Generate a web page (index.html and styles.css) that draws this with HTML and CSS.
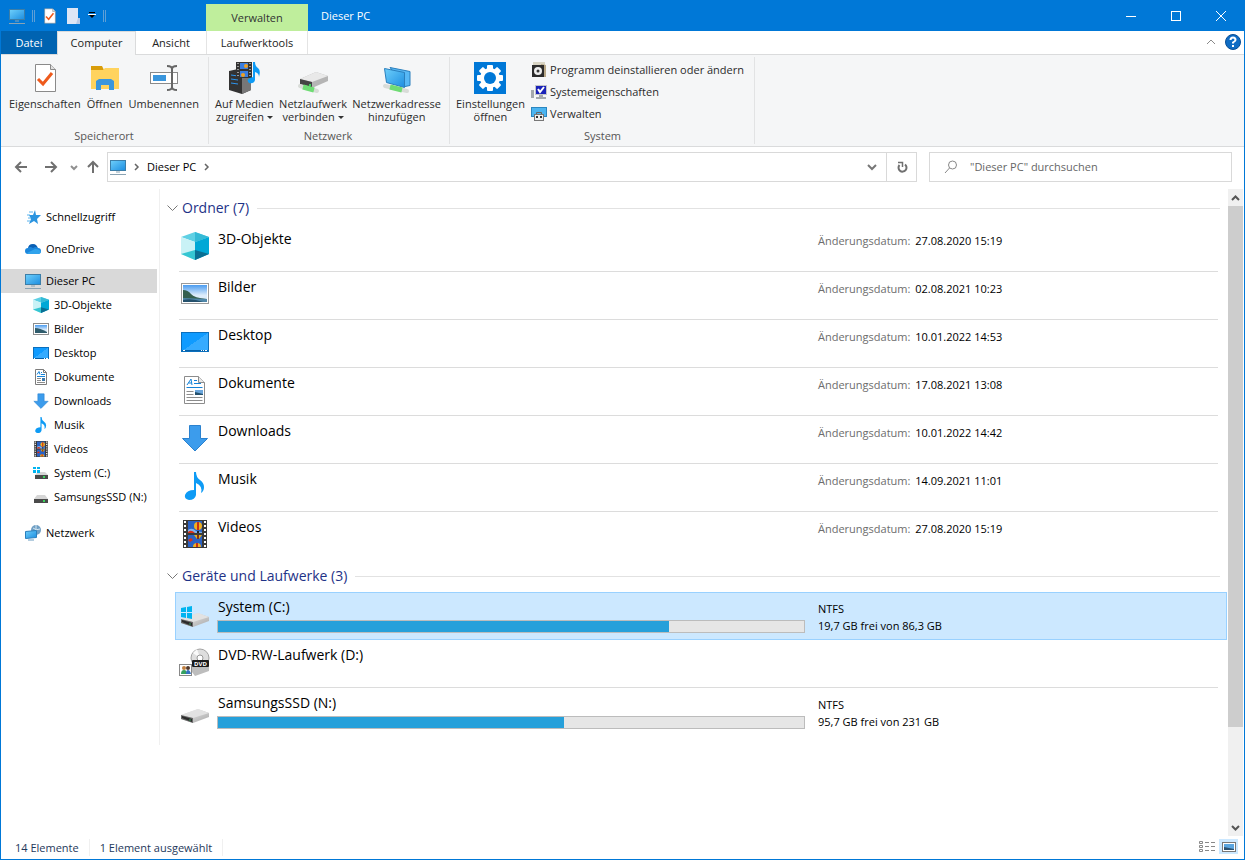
FILE: index.html
```html
<!DOCTYPE html>
<html lang="de">

<head>
    <meta charset="UTF-8">
    <meta name="viewport" content="width=device-width, initial-scale=1.0">
    <title>Dieser PC</title>
    <link rel="stylesheet" href="styles.css">
</head>

<body>

    <!-- shared icons -->
    <svg class="sprite" aria-hidden="true">
        <defs>
            <linearGradient id="g-screen" x1="0" y1="0" x2="1" y2="1">
                <stop offset="0" stop-color="#6fd0fb" />
                <stop offset="1" stop-color="#1c8de0" />
            </linearGradient>
            <linearGradient id="g-desk" x1="0" y1="0" x2="1" y2="1">
                <stop offset="0.5" stop-color="#0f9bff" />
                <stop offset="0.5" stop-color="#35abff" />
            </linearGradient>
            <linearGradient id="g-sky" x1="0" y1="0" x2="0" y2="1">
                <stop offset="0" stop-color="#4b9cf0" />
                <stop offset="0.6" stop-color="#dcecfb" />
            </linearGradient>
            <linearGradient id="g-drive" x1="0" y1="0" x2="1" y2="1">
                <stop offset="0" stop-color="#f2f2f2" />
                <stop offset="1" stop-color="#a8a8a8" />
            </linearGradient>
        </defs>
        <symbol id="i-pc" viewBox="0 0 16 16">
            <rect x="0.5" y="1.5" width="15" height="10" fill="url(#g-screen)" stroke="#3c7ea8" />
            <path d="M6 13h4M0 15.5h16" stroke="#8aa3b3" />
        </symbol>
        <symbol id="i-cube" viewBox="0 0 28 28">
            <path d="M0 5L14 0l14 5-14 5z" fill="#5fd0e4" />
            <path d="M14 0l14 5-14 5z" fill="#35bad6" />
            <path d="M0 5l14 5v18L0 22z" fill="#c9f2f6" />
            <path d="M28 5l-14 5v18l14-6z" fill="#00a8d6" />
            <path d="M0 22l14-4v10z" fill="#35c6d2" />
            <path d="M28 22l-14-4v10z" fill="#0a6f93" />
        </symbol>
        <symbol id="i-picture" viewBox="0 0 28 28">
            <rect x="0.5" y="3.5" width="27" height="20" fill="#fff" stroke="#9a9a9a" />
            <rect x="2" y="5" width="24" height="17" fill="url(#g-sky)" />
            <path d="M2 10q5 0 8 4t16 5v1H2z" fill="#35604f" />
            <path d="M2 18l24 1v3H2z" fill="#4f86a8" />
            <path d="M2 20q9-2 20 2H2z" fill="#24506c" />
        </symbol>
        <symbol id="i-picture-small" viewBox="0 0 16 16">
            <rect x="0.5" y="2.5" width="15" height="11" fill="#fff" stroke="#8c8c8c" />
            <rect x="2" y="4" width="12" height="8" fill="url(#g-sky)" />
            <path d="M2 7q5 0 12 4v1H2z" fill="#2f5c6c" />
        </symbol>
        <symbol id="i-desktop" viewBox="0 0 28 28">
            <rect x="0.5" y="4.5" width="27" height="19" fill="url(#g-desk)" stroke="#0a6fbd" />
            <path d="M1 22.5h26" stroke="#0560a8" />
            <path d="M2 22.5h2M20 22.5h1M22 22.5h1M24 22.5h2" stroke="#fff" />
        </symbol>
        <symbol id="i-desktop-small" viewBox="0 0 16 16">
            <rect x="0.5" y="2.5" width="15" height="11" fill="url(#g-desk)" stroke="#0a6fbd" />
            <path d="M1 13.5h14" stroke="#0560a8" />
            <path d="M1 13.5h1M11 13.5h1M13 13.5h2" stroke="#fff" />
        </symbol>
        <symbol id="i-doc" viewBox="0 0 28 28">
            <path d="M3.500 0.500h14l6 6v21h-20z" fill="#fff" stroke="#8c8c8c" />
            <path d="M17.500 0.500v6h6" fill="#e8e8e8" stroke="#8c8c8c" />
            <path d="M6 9l4-6 1 6M7.500 7h3M13 4.500h3M13 7.500h7M5.500 11.500h16" stroke="#1583d8" fill="none" />
            <path d="M5.500 15.500h7M5.500 18.500h7M5.500 21.500h16M5.500 24.500h16" stroke="#8c8c8c" />
            <rect x="14" y="14" width="8" height="5" fill="#6ba6dc" />
            <path d="M14 16l8 2v1h-8z" fill="#24506c" />
        </symbol>
        <symbol id="i-doc-small" viewBox="0 0 16 16">
            <path d="M2.500 0.500h8l3 3v12h-11z" fill="#fff" stroke="#7c7c7c" />
            <path d="M10.500 0.500v3h3" fill="none" stroke="#7c7c7c" />
            <path d="M4 5.500l2-3 1 3M8 3.500h1M8 5.500h4M4 7.500h8" stroke="#1583d8" fill="none" />
            <path d="M4 9.500h4M4 11.500h4M4 13.500h8" stroke="#8c8c8c" />
            <rect x="9" y="9" width="3" height="3" fill="#3f78a8" />
        </symbol>
        <symbol id="i-down" viewBox="0 0 28 28">
            <path d="M8.500 1.500h11v13h7L14 27 1.500 14.500h7z" fill="#3c9cec" stroke="#2b82cf" />
        </symbol>
        <symbol id="i-music" viewBox="0 0 28 28">
            <path d="M13 0h2q0 5 4 8t4 7q0 4-3 6 2-7-5-10v12q-1 5-7 5-5-1-4-5 2-5 9-5z" fill="#0e9bf5" />
        </symbol>
        <symbol id="i-video" viewBox="0 0 28 28">
            <rect x="2" y="0" width="24" height="28" fill="#3a3a3a" />
            <path d="M4 1v27M24 1v27" stroke="#fff" stroke-width="2" stroke-dasharray="2 2" />
            <rect x="7" y="1" width="14" height="12" fill="#2a62c4" />
            <rect x="7" y="15" width="14" height="12" fill="#2a62c4" />
            <path d="M7 10q4-3 8 1l6 1v1H7z" fill="#7fb3ec" />
            <path d="M7 12q3-3 7 1H7z" fill="#d83018" />
            <ellipse cx="17" cy="6" rx="4" ry="4" fill="#f0b020" />
            <path d="M17 2v8" stroke="#c83018" stroke-width="2" />
            <path d="M16 11h2v2h-2z" fill="#222" />
            <path d="M13 15h8l-3 4h-2z" fill="#e8b020" />
            <path d="M17 15v4" stroke="#803018" stroke-width="2" />
            <path d="M7 20l3-2 2 2-3 2z" fill="#d83018" />
            <path d="M12 27q0-4 4-4t4 4z" fill="#f0b020" />
            <path d="M16 23v4" stroke="#c83018" stroke-width="2" />
        </symbol>
        <symbol id="i-drive" viewBox="0 0 28 28">
            <path d="M0 19L17 13l11 4v4L12 27 0 23z" fill="url(#g-drive)" />
            <path d="M0 19L17 13l11 4-16 5z" fill="#e2e2e2" />
            <path d="M0 19l12 3v5L0 23z" fill="#6a6a6a" />
            <path d="M1 20l10 3v3L1 22z" fill="#2b2b2b" />
            <path d="M8 24h2" stroke="#3b9d5c" />
        </symbol>
        <symbol id="i-windrive" viewBox="0 0 28 28">
            <use href="#i-drive" />
            <path d="M0 8l5-1v5H0zM6 7l5-1v6H6zM0 13h5v5l-5-1zM6 13h5v6l-5-1z" fill="#00b4f0" />
        </symbol>
        <symbol id="i-sdrive" viewBox="0 0 16 16">
            <path d="M4 6h8l3 4H1z" fill="#d6d6d6" />
            <rect x="1" y="10" width="14" height="4" fill="#4a4a4a" />
            <path d="M10 12h2" stroke="#3bd45c" stroke-width="2" />
        </symbol>
        <symbol id="i-swindrive" viewBox="0 0 16 16">
            <path d="M5 7h7l3 3H2z" fill="#d6d6d6" />
            <rect x="2" y="10" width="13" height="4" fill="#4a4a4a" />
            <path d="M10 12h2" stroke="#3bd45c" stroke-width="2" />
            <path d="M0 2h3v2H0zM4 2h3v2H4zM0 5h3v3H0zM4 5h3v3H4z" fill="#00b4f0" />
        </symbol>
        <symbol id="i-check" viewBox="0 0 32 32">
            <path d="M6.500 2.500h15l5 5v22h-20z" fill="#fff" stroke="#8a8a8a" />
            <path d="M21.500 2.500v5h5" fill="#e0e0e0" stroke="#8a8a8a" />
            <path d="M9 17l5 5 9-11" fill="none" stroke="#ee5a1c" stroke-width="3" />
        </symbol>
    </svg>

    <div class="window">

        <header class="titlebar">
            <div class="quick">
                <svg class="ic16"><use href="#i-pc" /></svg>
                <span class="sep"></span>
                <button class="quick-btn props" aria-label="Eigenschaften"><svg class="ic16" viewBox="5 1 23 30"><use href="#i-check" width="32" height="32" /></svg></button>
                <button class="quick-btn" aria-label="Neuer Ordner"><svg class="ic16" viewBox="0 0 16 16"><path d="M2 0h11v10h2v6H2z" fill="#dde6f5" /><path d="M13 10h2v6h-4z" fill="#b9cbe8" /></svg></button>
                <button class="quick-btn small" aria-label="Anpassen"><svg width="8" height="7" viewBox="0 0 8 7"><path d="M1 0.500h6" stroke="#000" /><path d="M0 2.500h8" stroke="#fff" /><path d="M1 3h6L4 6z" fill="#000" /></svg></button>
                <span class="sep"></span>
            </div>
            <div class="context-title">Verwalten</div>
            <h1 class="title">Dieser PC</h1>
            <div class="caption">
                <button aria-label="Minimieren"><svg width="10" height="10" viewBox="0 0 10 10"><path d="M0 5.500h10" stroke="#fff" /></svg></button>
                <button aria-label="Maximieren"><svg width="10" height="10" viewBox="0 0 10 10"><rect x="0.500" y="0.500" width="9" height="9" fill="none" stroke="#fff" /></svg></button>
                <button aria-label="Schließen"><svg width="10" height="10" viewBox="0 0 10 10"><path d="M0 0l10 10M10 0L0 10" stroke="#fff" /></svg></button>
            </div>
        </header>

        <div class="tabs">
            <button class="tab file">Datei</button>
            <button class="tab active">Computer</button>
            <button class="tab view">Ansicht</button>
            <button class="tab tools">Laufwerktools</button>
            <div class="tabs-right">
                <button aria-label="Menüband minimieren"><svg width="10" height="6" viewBox="0 0 10 6"><path d="M1 5l4-4 4 4" fill="none" stroke="#8a8a8a" /></svg></button>
                <button aria-label="Hilfe"><svg width="16" height="16" viewBox="0 0 16 16"><circle cx="8" cy="8" r="7.500" fill="#0f6cc4" stroke="#0a4f96" /><path d="M5.500 6q0-2.500 2.500-2.500T10.500 6Q10.500 7 8 8.500v1M8 11v2" fill="none" stroke="#fff" stroke-width="2" /></svg></button>
            </div>
        </div>

        <div class="ribbon">
            <section class="group place">
                <div class="tools-row">
                    <button class="big"><svg class="ic32"><use href="#i-check" /></svg>Eigenschaften</button>
                    <button class="big"><svg class="ic32" viewBox="0 0 32 32"><path d="M2 4h11l2 4H2z" fill="#d99d0a" /><path d="M2 8h12l2-2h14v21H2z" fill="#ffd35e" /><path d="M7 28V19l3-2h12l3 2v9h-5v-5h-8v5z" fill="#3a96dd" /></svg>Öffnen</button>
                    <button class="big"><svg class="ic32" viewBox="0 0 32 32"><rect x="2.500" y="10.500" width="27" height="11" fill="#fff" stroke="#8a8a8a" /><rect x="5" y="13" width="13" height="6" fill="#3a96dd" /><path d="M24 5v22M19 4q5 0 5 3 0-3 5-3M19 28q5 0 5-3 0 3 5 3" fill="none" stroke="#666" stroke-width="2" /></svg>Umbenennen</button>
                </div>
                <h2>Speicherort</h2>
            </section>
            <section class="group net">
                <div class="tools-row">
                    <button class="big"><svg class="ic32" viewBox="0 0 32 32"><path d="M1 9l9-2 13 3v18l-9 4L1 28z" fill="#333" /><path d="M14 12l9-2v18l-9 4z" fill="#777" /><path d="M3 13l7 1M3 17l7 1M3 21l7 1" stroke="#2d95ee" /><rect x="8" y="0" width="16" height="16" fill="#333" /><path d="M10 1v15M22 1v15" stroke="#fff" stroke-dasharray="1 2" /><rect x="12" y="1" width="8" height="6" fill="#3a7ee0" /><rect x="12" y="9" width="8" height="6" fill="#3a7ee0" /><circle cx="18" cy="4" r="2" fill="#f0a020" /><circle cx="15" cy="13" r="2" fill="#f0a020" /><path d="M25 0h2q0 4 3 6t1 9q0-4-4-5v8q-1 4-6 3-4-4 4-6z" fill="#0e9bf5" /></svg><span>Auf Medien<br>zugreifen <i class="drop"></i></span></button>
                    <button class="big"><svg class="ic32" viewBox="0 0 32 32"><path d="M3 17L19 10l12 4v5l-16 7-12-4z" fill="#b5b5b5" /><path d="M3 17L19 10l12 4-16 6z" fill="#e9e9e9" /><path d="M3 17l12 3v6L3 22z" fill="#444" /><path d="M3 24l17 5" stroke="#d8dcd8" stroke-width="4" stroke-linecap="round" /><path d="M6 25l11 3" stroke="#6fdc74" stroke-width="5" /><path d="M12 23h2" stroke="#3bd45c" stroke-width="2" /></svg><span>Netzlaufwerk<br>verbinden <i class="drop"></i></span></button>
                    <button class="big"><svg class="ic32" viewBox="0 0 32 32"><path d="M9 5.500l20 4v14l-5 1z" fill="#57b8f5" stroke="#2a7fbd" /><path d="M3.500 6.500l20 4v15l-18-5z" fill="url(#g-screen)" stroke="#2a7fbd" /><path d="M4 24l22 5" stroke="#d8dcd8" stroke-width="4" stroke-linecap="round" /><path d="M9 25l12 3" stroke="#6fdc74" stroke-width="5" /></svg><span>Netzwerkadresse<br>hinzufügen</span></button>
                </div>
                <h2>Netzwerk</h2>
            </section>
            <section class="group sys">
                <div class="tools-row">
                    <button class="big"><svg class="ic32" viewBox="0 0 32 32"><rect width="32" height="32" fill="#0078d7" /><g fill="#fff"><rect id="tooth" x="13" y="3" width="6" height="26" rx="1" /><use href="#tooth" transform="rotate(45 16 16)" /><use href="#tooth" transform="rotate(90 16 16)" /><use href="#tooth" transform="rotate(135 16 16)" /><circle cx="16" cy="16" r="10" /></g><circle cx="16" cy="16" r="6" fill="#0078d7" /></svg><span>Einstellungen<br>öffnen</span></button>
                    <div class="stack">
                        <button class="line"><svg class="ic16" viewBox="0 0 16 16"><path d="M2 0h12v5H2z" fill="#d8d4c4" /><path d="M10 2l5 1v12h-5z" fill="#b8a888" /><rect x="1" y="3" width="12" height="12" fill="#2c2c2c" /><circle cx="7" cy="9" r="4" fill="#eee" /><circle cx="7" cy="9" r="1.500" fill="#333" /></svg>Programm deinstallieren oder ändern</button>
                        <button class="line"><svg class="ic16" viewBox="0 0 16 16"><rect x="0" y="6" width="3" height="8" fill="#a5a9ad" /><rect x="4" y="1" width="12" height="10" fill="#c4c6ca" /><rect x="5" y="2" width="10" height="8" fill="#1a22b8" /><path d="M7 5l2 3 4-5" stroke="#fff" stroke-width="2" fill="none" /><path d="M8 11h4v2h3v2H5v-2h3z" fill="#a5a9ad" /></svg>Systemeigenschaften</button>
                        <button class="line"><svg class="ic16" viewBox="0 0 16 16"><rect x="0.500" y="1.500" width="15" height="9" fill="#4bb4f0" stroke="#2a86c0" /><path d="M5.500 8V6.500h5V8" fill="none" stroke="#666" /><rect x="3.500" y="8.500" width="9" height="6" fill="#eee" stroke="#777" /><path d="M5 10h2v2H5zM9 10h2v2H9z" fill="#333" /></svg>Verwalten</button>
                    </div>
                </div>
                <h2>System</h2>
            </section>
        </div>

        <div class="addressbar">
            <div class="history">
                <button aria-label="Zurück"><svg width="14" height="12" viewBox="0 0 14 12"><path d="M13 6H2M7 1L2 6l5 5" fill="none" stroke="#707070" stroke-width="2" /></svg></button>
                <button aria-label="Vorwärts"><svg width="14" height="12" viewBox="0 0 14 12"><path d="M1 6h11M7 1l5 5-5 5" fill="none" stroke="#707070" stroke-width="2" /></svg></button>
                <button class="narrow" aria-label="Verlauf"><svg width="6" height="5" viewBox="0 0 6 5"><path d="M0 1l3 3 3-3" fill="none" stroke="#909090" stroke-width="2" /></svg></button>
                <button class="up" aria-label="Nach oben"><svg width="12" height="14" viewBox="0 0 12 14"><path d="M6 13V2M1 7l5-5 5 5" fill="none" stroke="#707070" stroke-width="2" /></svg></button>
            </div>
            <div class="path">
                <svg class="ic16"><use href="#i-pc" /></svg>
                <svg class="crumb" width="5" height="8" viewBox="0 0 5 8"><path d="M1 1l3 3-3 3" fill="none" stroke="#666" stroke-width="1.500" /></svg>
                <a href="#">Dieser PC</a>
                <svg class="crumb" width="5" height="8" viewBox="0 0 5 8"><path d="M1 1l3 3-3 3" fill="none" stroke="#666" stroke-width="1.500" /></svg>
                <button class="open" aria-label="Vorherige Orte"><svg width="10" height="7" viewBox="0 0 10 7"><path d="M1 1l4 4 4-4" fill="none" stroke="#777" stroke-width="2" /></svg></button>
                <button class="reload" aria-label="Aktualisieren"><svg width="12" height="12" viewBox="0 0 12 12"><path d="M9 3.500A4 4 0 1 1 3.500 4" fill="none" stroke="#707070" stroke-width="2" /><path d="M2 1.500h4.500V6" fill="none" stroke="#707070" stroke-width="1.500" /></svg></button>
            </div>
            <div class="search">
                <svg width="14" height="14" viewBox="0 0 14 14"><circle cx="8.500" cy="5" r="4" fill="none" stroke="#888" /><path d="M5.500 8L1 13" stroke="#888" /></svg>
                <input type="search" aria-label="Suchen" placeholder="&quot;Dieser PC&quot; durchsuchen">
            </div>
        </div>

        <div class="main">
            <div class="browse">
                <nav class="tree">
                    <a href="#"><svg class="ic16" viewBox="0 0 16 16"><path d="M10 1l1 5h5l-4 4 1 5-4-3-5 3 2-5-2-4h4z" fill="#2a94e0" /><path d="M4 3h4M2 6h3M3 9h3M2 12h3" stroke="#5bb4ee" /></svg>Schnellzugriff</a>
                    <a href="#"><svg class="ic16" viewBox="0 0 16 16"><path d="M3 8q0-5 5-5 4 0 5 5z" fill="#0a5fb4" /><path d="M0 10q0-3 3-3 2-2 5 0 3-2 5 0 3 0 3 3t-3 3H3q-3 0-3-3z" fill="#1b86dc" /><path d="M2 12l8-4q5 0 6 3-1 2-3 2H3z" fill="#30a3ec" /></svg>OneDrive</a>
                    <a href="#" class="current"><svg class="ic16"><use href="#i-pc" /></svg>Dieser PC</a>
                    <ul>
                        <li><a href="#"><svg class="ic16"><use href="#i-cube" /></svg>3D-Objekte</a></li>
                        <li><a href="#"><svg class="ic16"><use href="#i-picture-small" /></svg>Bilder</a></li>
                        <li><a href="#"><svg class="ic16"><use href="#i-desktop-small" /></svg>Desktop</a></li>
                        <li><a href="#"><svg class="ic16"><use href="#i-doc-small" /></svg>Dokumente</a></li>
                        <li><a href="#"><svg class="ic16"><use href="#i-down" /></svg>Downloads</a></li>
                        <li><a href="#"><svg class="ic16"><use href="#i-music" /></svg>Musik</a></li>
                        <li><a href="#"><svg class="ic16"><use href="#i-video" /></svg>Videos</a></li>
                        <li><a href="#"><svg class="ic16"><use href="#i-swindrive" /></svg>System (C:)</a></li>
                        <li><a href="#"><svg class="ic16"><use href="#i-sdrive" /></svg>SamsungsSSD (N:)</a></li>
                    </ul>
                    <a href="#" class="network"><svg class="ic16" viewBox="0 0 16 16"><circle cx="11" cy="5" r="5" fill="#6f9fc4" /><path d="M8 3q3 3 7 1M11 0v9" stroke="#d3e6f2" fill="none" /><path d="M0.500 6.500l11-1v7l-11 1z" fill="url(#g-screen)" stroke="#2a7fbd" /><path d="M3 15h6" stroke="#6a9cc0" /></svg>Netzwerk</a>
                </nav>

                <main class="list">
                    <h2 class="section"><svg width="11" height="7" viewBox="0 0 11 7"><path d="M0.500 0.500l5 5 5-5" fill="none" stroke="#777" /></svg><span>Ordner (7)</span></h2>
                    <div class="item"><div class="cells"><svg class="ic28"><use href="#i-cube" /></svg><div class="name">3D-Objekte</div><div class="info"><span>Änderungsdatum:</span> 27.08.2020 15:19</div></div></div>
                    <div class="item"><div class="cells"><svg class="ic28"><use href="#i-picture" /></svg><div class="name">Bilder</div><div class="info"><span>Änderungsdatum:</span> 02.08.2021 10:23</div></div></div>
                    <div class="item"><div class="cells"><svg class="ic28"><use href="#i-desktop" /></svg><div class="name">Desktop</div><div class="info"><span>Änderungsdatum:</span> 10.01.2022 14:53</div></div></div>
                    <div class="item"><div class="cells"><svg class="ic28"><use href="#i-doc" /></svg><div class="name">Dokumente</div><div class="info"><span>Änderungsdatum:</span> 17.08.2021 13:08</div></div></div>
                    <div class="item"><div class="cells"><svg class="ic28"><use href="#i-down" /></svg><div class="name">Downloads</div><div class="info"><span>Änderungsdatum:</span> 10.01.2022 14:42</div></div></div>
                    <div class="item"><div class="cells"><svg class="ic28"><use href="#i-music" /></svg><div class="name">Musik</div><div class="info"><span>Änderungsdatum:</span> 14.09.2021 11:01</div></div></div>
                    <div class="item last"><div class="cells"><svg class="ic28"><use href="#i-video" /></svg><div class="name">Videos</div><div class="info"><span>Änderungsdatum:</span> 27.08.2020 15:19</div></div></div>

                    <h2 class="section"><svg width="11" height="7" viewBox="0 0 11 7"><path d="M0.500 0.500l5 5 5-5" fill="none" stroke="#777" /></svg><span>Geräte und Laufwerke (3)</span></h2>
                    <div class="item selected"><div class="cells"><svg class="ic28"><use href="#i-windrive" /></svg><div class="name">System (C:)<div class="bar"><div class="fill" style="width: 77%"></div></div></div><div class="info">NTFS<br>19,7 GB frei von 86,3 GB</div></div></div>
                    <div class="item"><div class="cells"><svg class="ic28" viewBox="0 0 28 28"><path d="M8 20l10-4 10 2v5l-14 5z" fill="#bdbdbd" /><circle cx="19" cy="10" r="9" fill="#dedede" stroke="#a2a2a2" /><path d="M19 10l-7-5 4-4z" fill="#fafafa" /><circle cx="19" cy="10" r="3" fill="#fff" stroke="#999" /><rect x="11" y="12" width="17" height="7" rx="1" fill="#1a1a1a" /><text x="19.500" y="18" class="dvd">DVD</text><rect x="-1.500" y="16.500" width="12" height="11" fill="#fff" stroke="#888" /><circle cx="3" cy="20" r="2" fill="#c08040" /><circle cx="7" cy="20" r="2" fill="#50382c" /><path d="M0 26q0-4 3-4t3 4z" fill="#35a060" /><path d="M5 26q0-4 2-4t3 4z" fill="#3572c0" /></svg><div class="name">DVD-RW-Laufwerk (D:)</div></div></div>
                    <div class="item last"><div class="cells"><svg class="ic28"><use href="#i-drive" /></svg><div class="name">SamsungsSSD (N:)<div class="bar"><div class="fill" style="width: 59%"></div></div></div><div class="info">NTFS<br>95,7 GB frei von 231 GB</div></div></div>
                </main>
            </div>

            <div class="scrollbar">
                <button aria-label="Nach oben scrollen"><svg width="9" height="6" viewBox="0 0 9 6"><path d="M1 5l3.500-3.500L8 5" fill="none" stroke="#555" stroke-width="2" /></svg></button>
                <div class="track"><div class="thumb"></div></div>
                <button aria-label="Nach unten scrollen"><svg width="9" height="6" viewBox="0 0 9 6"><path d="M1 1l3.500 3.500L8 1" fill="none" stroke="#555" stroke-width="2" /></svg></button>
            </div>
        </div>

        <footer class="status">
            <span>14 Elemente</span>
            <span>1 Element ausgewählt</span>
            <div class="views">
                <button aria-label="Details"><svg width="16" height="12" viewBox="0 0 16 12"><path d="M0.500 0.500h3v2h-3zM0.500 4.500h3v2h-3zM0.500 8.500h3v2h-3z" fill="#fff" stroke="#888" /><path d="M6 1.500h4M12 1.500h4M6 5.500h4M12 5.500h4M6 9.500h4M12 9.500h4" stroke="#888" /></svg></button>
                <button class="on" aria-label="Große Symbole"><svg width="14" height="10" viewBox="0 0 14 10"><rect x="0.500" y="0.500" width="13" height="9" fill="#fff" stroke="#777" /><rect x="2" y="2" width="10" height="6" fill="#5aa5e0" /><path d="M2 5l10 2v1H2z" fill="#2a5070" /></svg></button>
            </div>
        </footer>
    </div>

</body>

</html>
```
FILE: styles.css
```css
* {
    box-sizing: border-box;
}

body {
    margin: 0;
    font-family: "Open Sans", "Noto Sans", sans-serif;
    font-size: 11px;
    line-height: 17px;
    color: #000;
    background-color: #fff;
}

button {
    font: inherit;
    color: inherit;
    background: none;
    border: none;
    padding: 0;
    display: flex;
    align-items: center;
    justify-content: center;
    cursor: pointer;
}

a {
    color: inherit;
    text-decoration: none;
}

h1,
h2,
ul {
    margin: 0;
    padding: 0;
    font-size: inherit;
    font-weight: normal;
    list-style: none;
}

svg {
    display: block;
    flex: none;
    overflow: visible;
}

.sprite {
    position: absolute;
    width: 0;
    height: 0;
}

.ic16 {
    width: 16px;
    height: 16px;
}

.ic28 {
    width: 28px;
    height: 28px;
}

.ic32 {
    width: 32px;
    height: 32px;
}

.window {
    display: flex;
    flex-direction: column;
    min-height: 100vh;
    border: 1px solid #0078d7;
    border-top: none;
}

/* title bar */
.titlebar {
    display: flex;
    height: 31px;
    background-color: #0078d7;
    color: #fff;
}

.quick {
    width: 205px;
    display: flex;
    align-items: center;
    padding-left: 8px;
    gap: 7px;
}

.quick .sep {
    width: 3px;
    height: 12px;
    border: 1px solid #5f9fd6;
    border-width: 0 1px;
}

.quick-btn.small {
    width: 8px;
}

.context-title {
    width: 102px;
    margin-top: 4px;
    line-height: 28px;
    text-align: center;
    color: #333;
    background-color: #bfee9c;
}

.title {
    flex: 1;
    padding-left: 13px;
    line-height: 31px;
}

.caption {
    display: flex;
    padding-right: 1px;
}

.caption button {
    width: 45px;
}

/* ribbon tabs */
.tabs {
    display: flex;
    height: 24px;
    border-bottom: 1px solid #dadbdc;
}

.tab {
    width: 70px;
    color: #222;
}

.tab.file {
    width: 56px;
    color: #fff;
    background-color: #0063b1;
}

.tab.active {
    width: 79px;
    margin-bottom: -1px;
    padding-bottom: 2px;
    background-color: #f5f6f7;
    border: 1px solid #dadbdc;
    border-bottom: none;
}

.tab.tools {
    width: 102px;
    border: 1px solid #e4e4e4;
    border-width: 0 1px;
}

.tabs-right {
    display: flex;
    gap: 9px;
    margin-left: auto;
    padding: 0 3px 2px 0;
}

/* ribbon */
.ribbon {
    display: flex;
    height: 92px;
    padding: 2px 0;
    background-color: #f5f6f7;
    border-bottom: 1px solid #dadbdc;
    color: #2b2b2b;
}

.group {
    display: flex;
    flex-direction: column;
    padding: 5px 6px 0;
    border-right: 1px solid #e2e3e4;
    white-space: nowrap;
}

.group h2 {
    margin-top: auto;
    text-align: center;
    color: #555;
}

.place {
    width: 208px;
    padding: 5px 8px 0 7px;
}

.net {
    width: 241px;
    padding: 5px 7px 0 5px;
}

.sys {
    width: 305px;
    padding: 5px 4px 0 5px;
}

.tools-row {
    display: flex;
    justify-content: space-between;
    height: 62px;
}

.big {
    flex-direction: column;
    justify-content: flex-start;
    padding: 0 1px;
    line-height: 13px;
}

.big .ic32 {
    margin-bottom: 3px;
}

.drop {
    display: inline-block;
    border: 3px solid transparent;
    border-top-color: #333;
    border-bottom: none;
    vertical-align: 2px;
}

.stack {
    margin-top: -3px;
    padding-right: 6px;
}

.line {
    height: 22px;
    line-height: 22px;
    gap: 3px;
}

/* address bar */
.addressbar {
    display: flex;
    align-items: center;
    height: 42px;
    padding: 0 12px 2px 8px;
}

.history {
    display: flex;
    width: 98px;
}

.history button {
    width: 30px;
    padding-right: 7px;
}

.history .narrow {
    width: 10px;
    padding: 0;
}

.history .up {
    width: 28px;
    padding: 0;
}

.path {
    display: flex;
    flex: 1;
    align-items: center;
    height: 30px;
    padding-left: 2px;
    border: 1px solid #d9d9d9;
}

.path .crumb {
    margin: 0 8px;
}

.path a {
    padding-bottom: 2px;
}

.path .open {
    width: 28px;
    margin-left: auto;
}

.path .reload {
    width: 30px;
    height: 28px;
    border-left: 1px solid #d9d9d9;
}

.search {
    display: flex;
    align-items: center;
    width: 303px;
    height: 30px;
    margin-left: 12px;
    padding-left: 14px;
    gap: 12px;
    border: 1px solid #d9d9d9;
}

.search input {
    flex: 1;
    padding: 0 0 2px;
    border: none;
    outline: none;
    font: inherit;
}

.search input::placeholder {
    color: #666;
    opacity: 1;
}

/* content */
.main {
    display: flex;
    flex: 1;
}

.browse {
    display: flex;
    flex: 1;
    align-self: flex-start;
}

.tree {
    width: 159px;
    padding: 16px 2px 0 0;
    border-right: 1px solid #f0f0f0;
    white-space: nowrap;
}

.tree a {
    display: flex;
    align-items: center;
    gap: 5px;
    height: 24px;
    padding: 0 0 2px 24px;
    margin-bottom: 8px;
}

.tree .ic16 {
    margin-top: 2px;
}

.tree .current {
    margin-bottom: 0;
    background-color: #d9d9d9;
}

.tree li a {
    margin-bottom: 0;
    padding-left: 32px;
}

.tree .network {
    margin-top: 12px;
}

.list {
    flex: 1;
    padding: 3px 1px 9px 15px;
}

.section {
    display: flex;
    align-items: center;
    height: 32px;
    margin: 0 7px 0 -8px;
    gap: 4px;
    font-size: 14px;
    color: #1e3287;
}

.section span {
    padding-bottom: 2px;
}

.section::after {
    content: "";
    flex: 1;
    height: 1px;
    margin-left: 4px;
    background-color: #e2e2e2;
}

.item {
    height: 48px;
    padding: 0 9px 0 4px;
}

.cells {
    display: grid;
    grid-template-columns: 28px minmax(0, 588px) 1fr;
    height: 48px;
    padding-left: 2px;
    border-bottom: 1px solid #dcdcdc;
}

.cells .ic28 {
    margin-top: 8px;
}

.last .cells,
.selected .cells {
    border-color: transparent;
}

.selected {
    background-color: #cce8ff;
    outline: 1px solid #99d1ff;
    outline-offset: -1px;
}

.name {
    padding-top: 5px;
    margin: 0 -8px 0 8px;
    font-size: 14px;
    line-height: 20px;
    text-indent: 1px;
}

.bar {
    height: 13px;
    margin-top: 3px;
    background-color: #e6e6e6;
    border: 1px solid #bcbcbc;
}

.fill {
    height: 100%;
    background-color: #26a0da;
}

.info {
    padding: 8px 0 0 21px;
}

.info span {
    margin-right: 2px;
    color: #6d6d6d;
}

.dvd {
    font-size: 6px;
    font-weight: bold;
    text-anchor: middle;
    fill: #fff;
}

/* scrollbar */
.scrollbar {
    display: flex;
    flex-direction: column;
    width: 15px;
    margin-right: 1px;
    background-color: #f0f0f0;
}

.scrollbar button {
    height: 17px;
}

.track {
    flex: 1;
}

.thumb {
    height: 85%;
    background-color: #cdcdcd;
}

/* status bar */
.status {
    display: flex;
    align-items: center;
    height: 23px;
    padding: 0 6px 0 14px;
    color: #1e395b;
}

.status span {
    padding-right: 10px;
    margin-right: 10px;
    border-right: 1px solid #f0f0f0;
}

.views {
    display: flex;
    gap: 3px;
    margin-left: auto;
    padding-bottom: 2px;
}

.views button {
    width: 19px;
    height: 15px;
}

.views .on {
    background-color: #cce8ff;
}
```
